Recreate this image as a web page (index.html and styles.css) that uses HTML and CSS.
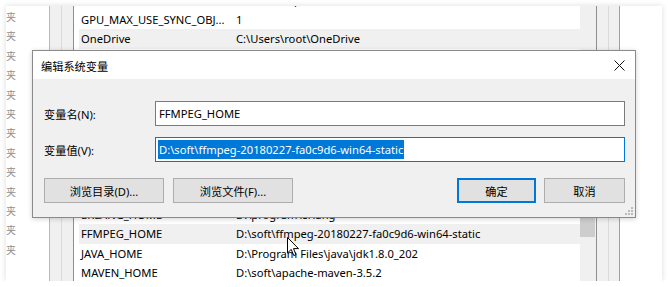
FILE: index.html
```html
<!DOCTYPE html>
<html lang="zh-CN">

<head>
  <meta charset="UTF-8">
  <meta name="viewport" content="width=device-width, initial-scale=1" />
  <title>编辑系统变量</title>
  <link rel="stylesheet" href="styles.css">
</head>

<body>

  <div class="shot">
    <div class="side">
      <span>夹</span><span>夹</span><span>夹</span><span>夹</span><span>夹</span>
      <span>夹</span><span>夹</span><span>夹</span><span>夹</span><span>夹</span>
      <span>夹</span><span>夹</span><span>夹</span>
    </div>

    <div class="frame"><div></div><div></div></div>

    <div class="list">
      <div class="rows">
        <div class="row"><span class="name">FPS_BROWSER_APP_PROFILE_STRING</span><span>Internet Explorer</span></div>
        <div class="row"><span class="name">GPU_MAX_USE_SYNC_OBJ...</span><span>1</span></div>
        <div class="row hot"><span class="name">OneDrive</span><span>C:\Users\root\OneDrive</span></div>
        <div class="row"><span class="name">ComSpec</span><span>C:\WINDOWS\system32\cmd.exe</span></div>
        <div class="row"><span class="name">DriverData</span><span>C:\Windows\System32\Drivers\DriverData</span></div>
        <div class="row"><span class="name">NUMBER_OF_PROCESSORS</span><span>8</span></div>
        <div class="row"><span class="name">OS</span><span>Windows_NT</span></div>
        <div class="row"><span class="name">Path</span><span>C:\WINDOWS\system32;C:\WINDOWS</span></div>
        <div class="row"><span class="name">PATHEXT</span><span>.COM;.EXE;.BAT;.CMD</span></div>
        <div class="row"><span class="name">PROCESSOR_ARCH</span><span>AMD64</span></div>
        <div class="row"><span class="name">PROCESSOR_LEVEL</span><span>6</span></div>
        <div class="row"><span class="name">ERLANG_HOME</span><span>D:\program\erlang</span></div>
        <div class="row hot"><span class="name">FFMPEG_HOME</span><span>D:\soft\ffmpeg-20180227-fa0c9d6-win64-static</span></div>
        <div class="row"><span class="name">JAVA_HOME</span><span>D:\Program Files\java\jdk1.8.0_202</span></div>
        <div class="row"><span class="name">MAVEN_HOME</span><span>D:\soft\apache-maven-3.5.2</span></div>
      </div>
    </div>

    <div class="scroll"><div class="thumb"></div></div>

    <div class="frame frame-r"><div></div><div></div></div>

    <div class="rest"></div>

    <svg class="cursor" width="13" height="20" viewBox="0 0 13 20">
      <path d="M0.5 0.5 L0.5 16 L4.2 12.4 L6.8 18.6 L9 17.6 L6.5 11.6 L11.5 11.6 Z" fill="#fff" stroke="#000" stroke-width="1" stroke-linejoin="miter" />
    </svg>

    <!-- 对话框 -->
    <div class="dialog">
      <div class="title">
        <span>编辑系统变量</span>
        <svg class="close" width="11" height="11" viewBox="0 0 11 11">
          <path d="M0.5 0.5 L10.5 10.5 M10.5 0.5 L0.5 10.5" stroke="#111" stroke-width="1" />
        </svg>
      </div>

      <div class="body">
        <div class="field">
          <label>变量名(N):</label>
          <div class="input">FFMPEG_HOME</div>
        </div>
        <div class="field">
          <label>变量值(V):</label>
          <div class="input focus"><span class="sel">D:\soft\ffmpeg-20180227-fa0c9d6-win64-static</span></div>
        </div>

        <div class="buttons">
          <button class="btn wide">浏览目录(D)...</button>
          <button class="btn wide">浏览文件(F)...</button>
          <div class="spacer"></div>
          <button class="btn ok">确定</button>
          <button class="btn cancel">取消</button>
        </div>

        <svg class="grip" width="8" height="8" viewBox="0 0 8 8">
          <rect x="6" y="0" width="2" height="2" fill="#bcbcbc" />
          <rect x="3" y="3" width="2" height="2" fill="#bcbcbc" />
          <rect x="6" y="3" width="2" height="2" fill="#bcbcbc" />
          <rect x="0" y="6" width="2" height="2" fill="#bcbcbc" />
          <rect x="3" y="6" width="2" height="2" fill="#bcbcbc" />
          <rect x="6" y="6" width="2" height="2" fill="#bcbcbc" />
        </svg>
      </div>
    </div>
  </div>

</body>

</html>
```

FILE: styles.css
```css
body {
  margin: 0;
  background: #ffffff;
  font-family: "Noto Sans", "Noto Sans CJK SC", sans-serif;
  font-size: 11.2px;
  color: #000;
}

.shot {
  position: relative;
  display: flex;
  margin: 6px 0 0 6px;
  width: 656px;
  height: 275px;
  overflow: hidden;
  background: #fff;
  box-shadow: 0 0 6px rgba(0, 0, 0, 0.14);
}

/* linke Leiste mit abgeschnittenen Ordnernamen */
.side {
  width: 43px;
  flex: none;
  display: flex;
  flex-direction: column;
  padding-top: 1px;
  font-family: "Noto Sans CJK SC", sans-serif;
  font-size: 10px;
  line-height: 19.4px;
  color: #8f8f8f;
}

.frame {
  flex: none;
  display: flex;
  width: 23px;
  background: #f0f0f0;
  border-left: 1px solid #b9b9b9;
  border-right: 1px solid #8e8e8e;
}

.frame div {
  width: 11px;
}

.frame div + div {
  width: 11px;
  border-left: 1px solid #dadada;
}

.frame-r {
  width: 22px;
  border-left: 1px solid #8e8e8e;
  border-right: 1px solid #a0a0a0;
}

.frame-r div + div {
  width: 10px;
}

.list {
  flex: none;
  width: 506px;
}

.rows {
  margin-top: -16px;
  padding-left: 5px;
}

.row {
  display: flex;
  height: 19.5px;
  line-height: 19.5px;
  padding-left: 2px;
  white-space: nowrap;
}

.row.hot {
  background: #f0f0f0;
}

.row .name {
  width: 155px;
  flex: none;
}

.scroll {
  flex: none;
  width: 16px;
  background: #f0f0f0;
}

.thumb {
  margin-top: 212px;
  width: 15px;
  height: 19px;
  background: #cdcdcd;
}

.rest {
  flex: 1;
}

.cursor {
  position: absolute;
  left: 281px;
  top: 231px;
}

/* dialog */
.dialog {
  position: absolute;
  left: 26px;
  top: 44px;
  width: 602px;
  height: 166px;
  border: 1px solid #8a8a8a;
  background: #f0f0f0;
  display: flex;
  flex-direction: column;
  box-shadow: 0 1px 5px rgba(0, 0, 0, 0.18);
}

.title {
  height: 28px;
  flex: none;
  background: #fff;
  display: flex;
  align-items: center;
  padding: 0 10px 0 8px;
  font-family: "Noto Sans CJK SC", sans-serif;
  font-size: 11.2px;
}

.title span {
  flex: 1;
  margin-top: 2px;
}

.close {
  margin-top: 1px;
}

.body {
  position: relative;
  flex: 1;
  padding: 22px 10px 0 11px;
}

.field {
  display: flex;
  align-items: center;
  margin-bottom: 11px;
}

.field label {
  width: 111px;
  flex: none;
  font-family: "Noto Sans", "Noto Sans CJK SC", sans-serif;
}

.input {
  flex: 1;
  height: 23px;
  line-height: 23px;
  border: 1px solid #7a7a7a;
  background: #fff;
  padding-left: 3px;
  white-space: nowrap;
  overflow: hidden;
}

.input.focus {
  border-color: #0078d7;
  padding-left: 2px;
}

.sel {
  background: #0078d7;
  color: #fff;
  padding: 2px 1px;
}

.buttons {
  display: flex;
  gap: 9px;
  margin-top: 16px;
}

.spacer {
  flex: 1;
}

.btn {
  height: 25px;
  padding: 0;
  background: #e1e1e1;
  border: 1px solid #adadad;
  font-family: "Noto Sans", "Noto Sans CJK SC", sans-serif;
  font-size: 11.2px;
  color: #000;
}

.btn.wide {
  width: 120px;
}

.btn.ok {
  width: 79px;
  border: 2px solid #0078d7;
  margin-right: -1px;
}

.btn.cancel {
  width: 81px;
}

.grip {
  position: absolute;
  right: 2px;
  bottom: 2px;
}
```
